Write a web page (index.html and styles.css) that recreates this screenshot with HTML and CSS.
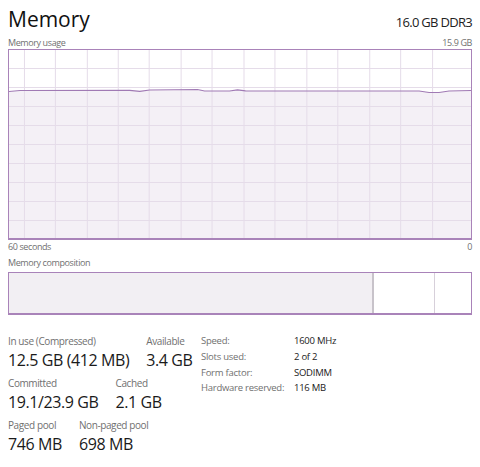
FILE: index.html
```html
<!DOCTYPE html>
<html lang="en">
<head>
    <meta charset="UTF-8">
    <meta name="viewport" content="width=device-width, initial-scale=1.0">
    <title>Memory</title>
    <link rel="stylesheet" href="styles.css">
</head>
<body>
    <div class="panel">
        <div class="header">
            <h1 class="title">Memory</h1>
            <div class="spec">16.0 GB DDR3</div>
        </div>

        <div class="caption">
            <span>Memory usage</span>
            <span>15.9 GB</span>
        </div>
        <div class="graph">
            <svg viewBox="0 0 463 188" preserveAspectRatio="none">
                <path class="area" d="M0,41.5 L11,40.5 L121,40.3 L131,41.3 L141,40 L189,39.5 L196,41 L221,41 L229,39.8 L237,40.8 L411,41 L421,42.5 L431,42.5 L441,41 L463,40.5 L463,188 L0,188 Z"/>
                <g class="grid">
                    <line x1="15.5" y1="0" x2="15.5" y2="188"/>
                    <line x1="46.5" y1="0" x2="46.5" y2="188"/>
                    <line x1="78.5" y1="0" x2="78.5" y2="188"/>
                    <line x1="109.5" y1="0" x2="109.5" y2="188"/>
                    <line x1="140.5" y1="0" x2="140.5" y2="188"/>
                    <line x1="172.5" y1="0" x2="172.5" y2="188"/>
                    <line x1="203.5" y1="0" x2="203.5" y2="188"/>
                    <line x1="235.5" y1="0" x2="235.5" y2="188"/>
                    <line x1="266.5" y1="0" x2="266.5" y2="188"/>
                    <line x1="298.5" y1="0" x2="298.5" y2="188"/>
                    <line x1="329.5" y1="0" x2="329.5" y2="188"/>
                    <line x1="361.5" y1="0" x2="361.5" y2="188"/>
                    <line x1="392.5" y1="0" x2="392.5" y2="188"/>
                    <line x1="424.5" y1="0" x2="424.5" y2="188"/>
                    <line x1="0" y1="18.5" x2="463" y2="18.5"/>
                    <line x1="0" y1="37.5" x2="463" y2="37.5"/>
                    <line x1="0" y1="56.5" x2="463" y2="56.5"/>
                    <line x1="0" y1="75.5" x2="463" y2="75.5"/>
                    <line x1="0" y1="94.5" x2="463" y2="94.5"/>
                    <line x1="0" y1="113.5" x2="463" y2="113.5"/>
                    <line x1="0" y1="132.5" x2="463" y2="132.5"/>
                    <line x1="0" y1="151.5" x2="463" y2="151.5"/>
                    <line x1="0" y1="170.5" x2="463" y2="170.5"/>
                </g>
                <path class="usage" d="M0,41.5 L11,40.5 L121,40.3 L131,41.3 L141,40 L189,39.5 L196,41 L221,41 L229,39.8 L237,40.8 L411,41 L421,42.5 L431,42.5 L441,41 L463,40.5"/>
            </svg>
        </div>
        <div class="caption caption-axis">
            <span>60 seconds</span>
            <span>0</span>
        </div>

        <div class="caption caption-composition">
            <span>Memory composition</span>
        </div>
        <div class="composition">
            <div class="seg seg-inuse" style="width: 363px"></div>
            <div class="seg seg-standby" style="width: 60px"></div>
            <div class="seg seg-free"></div>
        </div>

        <div class="stats">
            <div class="stats-main">
                <div class="stat-row">
                    <div class="stat">
                        <div class="stat-label">In use (Compressed)</div>
                        <div class="stat-value">12.5 GB (412 MB)</div>
                    </div>
                    <div class="stat">
                        <div class="stat-label">Available</div>
                        <div class="stat-value">3.4 GB</div>
                    </div>
                </div>
                <div class="stat-row">
                    <div class="stat">
                        <div class="stat-label">Committed</div>
                        <div class="stat-value">19.1/23.9 GB</div>
                    </div>
                    <div class="stat">
                        <div class="stat-label">Cached</div>
                        <div class="stat-value">2.1 GB</div>
                    </div>
                </div>
                <div class="stat-row">
                    <div class="stat">
                        <div class="stat-label">Paged pool</div>
                        <div class="stat-value">746 MB</div>
                    </div>
                    <div class="stat">
                        <div class="stat-label">Non-paged pool</div>
                        <div class="stat-value">698 MB</div>
                    </div>
                </div>
            </div>

            <table class="details">
                <tr><td class="key">Speed:</td><td>1600 MHz</td></tr>
                <tr><td class="key">Slots used:</td><td>2 of 2</td></tr>
                <tr><td class="key">Form factor:</td><td>SODIMM</td></tr>
                <tr><td class="key">Hardware reserved:</td><td>116 MB</td></tr>
            </table>
        </div>
    </div>
</body>
</html>
```

FILE: styles.css
```css
body {
    margin: 0;
    background: #fff;
    font-family: "Open Sans", "Noto Sans", sans-serif;
    color: #1a1a1a;
}

.panel {
    width: 464px;
    padding: 4px 8px 0;
}

.header {
    display: flex;
    justify-content: space-between;
    align-items: baseline;
}

.title {
    margin: 0;
    font-size: 21px;
    font-weight: normal;
    line-height: 30px;
    color: #111;
}

.spec {
    font-size: 13px;
    letter-spacing: -0.7px;
    color: #222;
}

.caption {
    display: flex;
    justify-content: space-between;
    margin-top: 3px;
    font-size: 9px;
    line-height: 12px;
    letter-spacing: -0.4px;
    color: #707070;
}

.caption-axis {
    margin-top: 1px;
}

.caption-composition {
    margin-top: 4px;
}

.graph {
    box-sizing: border-box;
    height: 191px;
    border: 1px solid #a983b9;
    border-bottom-width: 2px;
    background: #fff;
}

.graph svg {
    display: block;
    width: 100%;
    height: 100%;
}

.graph .area {
    fill: #f4f0f6;
}

.graph .grid line {
    stroke: #e5dce9;
    stroke-width: 1;
}

.graph .usage {
    fill: none;
    stroke: #a07ab4;
    stroke-width: 1.2;
}

.composition {
    box-sizing: border-box;
    display: flex;
    height: 43px;
    margin-top: 3px;
    border: 1px solid #a983b9;
    border-bottom-width: 2px;
}

.seg {
    height: 100%;
}

.seg-inuse {
    background: #f2eff3;
    border-right: 2px solid #c8c3ca;
}

.seg-standby {
    background: #fff;
    border-right: 1px solid #d7d0da;
}

.seg-free {
    flex: 1;
    background: #fff;
}

.stats {
    display: flex;
    align-items: flex-start;
    margin-top: 20px;
}

.stats-main {
    width: 193px;
}

.stat-row {
    display: flex;
    gap: 17px;
    margin-bottom: 7px;
}

.stat-label {
    font-size: 10px;
    line-height: 13px;
    letter-spacing: -0.4px;
    color: #707070;
    white-space: nowrap;
}

.stat-value {
    margin-top: 2px;
    font-size: 16px;
    line-height: 20px;
    letter-spacing: -0.4px;
    color: #1a1a1a;
    white-space: nowrap;
}

.details {
    margin-top: -2px;
    border-collapse: collapse;
    font-size: 9.5px;
    line-height: 15.8px;
    letter-spacing: -0.25px;
}

.details td {
    padding: 0;
    color: #1a1a1a;
    white-space: nowrap;
}

.details .key {
    width: 93px;
    color: #707070;
}
```
